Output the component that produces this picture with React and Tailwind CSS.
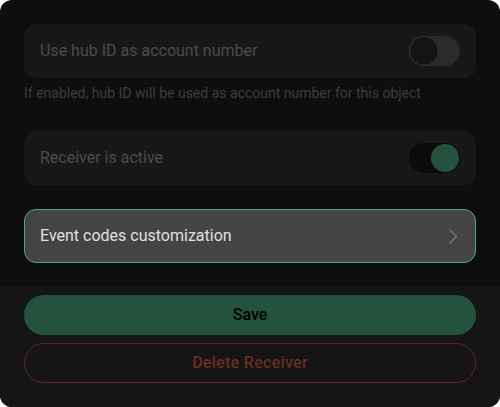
import React from "react";

function Toggle({ on }) {
  return on ? (
    <div className="w-[51px] h-[30px] rounded-full bg-[#0b0b0b] flex items-center justify-end pr-[1px]">
      <div className="w-[28px] h-[28px] rounded-full bg-[#23523e]" />
    </div>
  ) : (
    <div className="w-[51px] h-[30px] rounded-full bg-[#2a2a2a] flex items-center">
      <div className="w-[30px] h-[30px] rounded-full bg-[#141414] border border-[#353535]" />
    </div>
  );
}

export default function App() {
  return (
    <div
      className="w-[500px] h-[407px] bg-white"
      style={{ fontFamily: "Roboto, 'Liberation Sans', sans-serif" }}
    >
      <div className="w-full h-full rounded-[12px] overflow-hidden flex flex-col bg-[#0e0e0e]">
        <div className="flex-1 px-6 pt-6 pb-6 flex flex-col">
          <div className="h-[54px] rounded-[12px] bg-[#181818] flex items-center justify-between pl-4 pr-4">
            <span className="text-[16px] text-[#4b4b4b]">Use hub ID as account number</span>
            <Toggle on={false} />
          </div>
          <div className="mt-[6px] text-[14px] leading-[18px] text-[#3d3d3d]">
            If enabled, hub ID will be used as account number for this object
          </div>
          <div className="mt-[29px] h-[54px] rounded-[12px] bg-[#181818] flex items-center justify-between pl-4 pr-4">
            <span className="text-[16px] text-[#4b4b4b]">Receiver is active</span>
            <Toggle on={true} />
          </div>
          <div className="mt-6 h-[54px] rounded-[12px] bg-[#444444] border border-[#47a87a] flex items-center justify-between pl-[15px] pr-[17px]">
            <span className="text-[16px] text-[#e0e0e0]">Event codes customization</span>
            <svg width="10" height="17" viewBox="0 0 10 17" fill="none">
              <path d="M1.5 1.5 L8.5 8.5 L1.5 15.5" stroke="#777777" strokeWidth="1.4" />
            </svg>
          </div>
        </div>
        <div className="bg-[#151515] px-6 pt-2 pb-6 flex flex-col gap-2">
          <button className="h-10 rounded-full bg-[#23523e] text-black text-[16px] font-medium">
            Save
          </button>
          <button className="h-10 rounded-full border border-[#5a2920] text-[#6b2c22] text-[16px] font-medium tracking-[0.3px]">
            Delete Receiver
          </button>
        </div>
      </div>
    </div>
  );
}
